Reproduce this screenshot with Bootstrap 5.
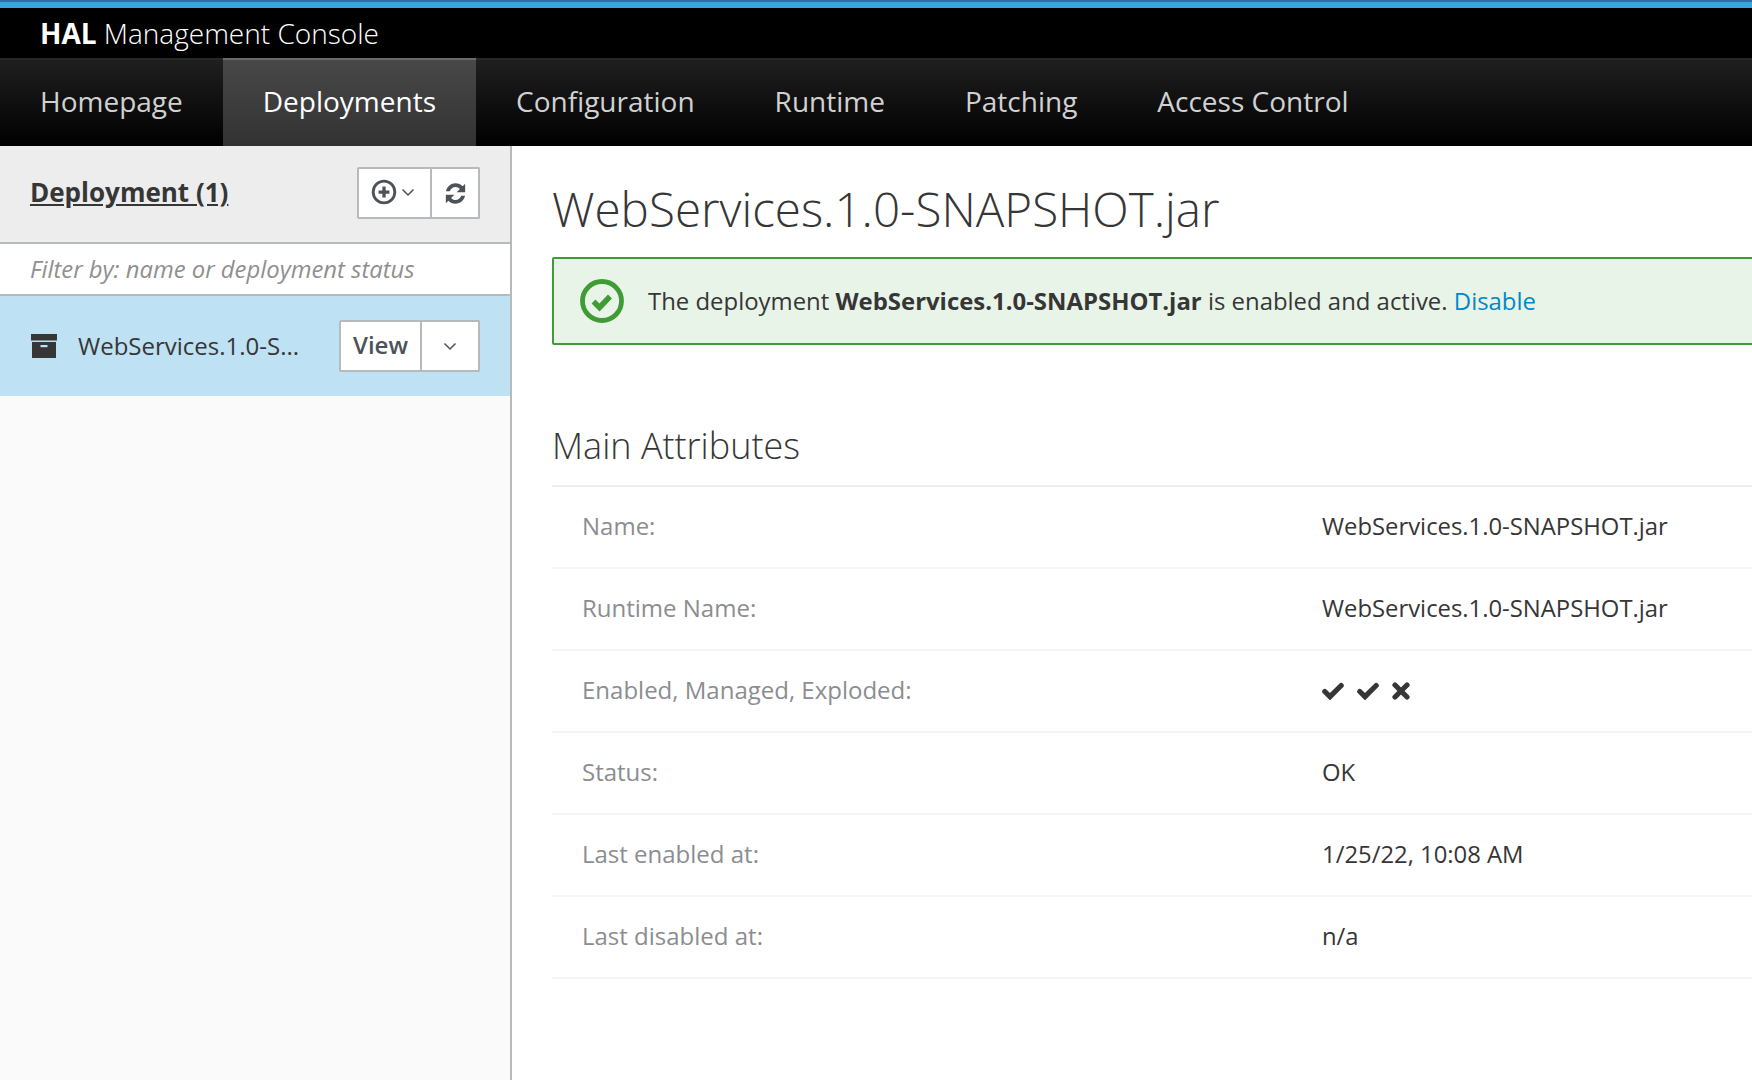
<!DOCTYPE html>
<html lang="en">
<head>
<meta charset="utf-8">
<title>HAL Management Console</title>
<link href="https://cdn.jsdelivr.net/npm/bootstrap@5.3.0/dist/css/bootstrap.min.css" rel="stylesheet">
<style>
html,body{height:100%;overflow:hidden}
body{font-family:"Open Sans",sans-serif;color:#363636;background:#fff;font-size:24px}
.shell{height:1080px;display:flex;flex-direction:column}
.topline{height:8px;background:#39a5dc;border-top:2px solid #2d6ea6;flex:none}
.brandbar{height:50px;background:#000;color:#fff;padding-left:40px;font-size:28px;font-weight:300;line-height:50px;flex:none}
.brandbar b{font-weight:700}
.mainnav{height:88px;background:linear-gradient(#1f1f1f,#000);border-top:2px solid #272727;flex:none}
.mainnav a{display:block;padding:0 40px;height:88px;margin-top:-2px;line-height:82px;font-size:28px;color:#d1d1d1;text-decoration:none;border-top:2px solid transparent}
.mainnav a.on{background:linear-gradient(#484848,#323232);border-top-color:#6a6a6a;color:#fff}
.workarea{flex:1;min-height:0}
.sidepane{width:512px;flex:none;background:#fafafa;border-right:2px solid #b7babd}
.sidehead{height:98px;background:#ededed;border-bottom:2px solid #b7babd;padding:0 30px 2px}
.sidehead .ttl{font-size:26px;font-weight:700;color:#363636;text-decoration:underline;margin-top:-1px}
.filterrow{height:52px;background:#fff;border-bottom:2px solid #b7babd;padding:0 30px;font-style:italic;color:#8f8f8f;font-size:23.85px;line-height:50px}
.itemrow{height:100px;background:#bee1f4;padding:0 30px 0 31px}
.itemname{font-size:24px;color:#363636;margin:-1px 0 0 21px;flex:1}
.boxbtn{display:flex;align-items:center;justify-content:center;background:#fff;border:2px solid #b7babd;color:#4d5258;padding:0}
.boxbtn+.boxbtn{border-left:0}
.addb{width:75px;height:52px;gap:4px;padding-right:3px;padding-bottom:2px;border-radius:2px 0 0 2px}
.refb{width:48px;height:52px;border-radius:0 2px 2px 0}
.viewb{width:83px;height:52px;font-size:24px;font-weight:600;border-radius:2px 0 0 2px;padding-bottom:2px}
.caretb{width:58px;height:52px;border-radius:0 2px 2px 0}
.mainpane{flex:1;min-width:0;padding:0 0 0 40px;overflow:hidden}
.pagetitle{font-size:47.6px;font-weight:300;line-height:60px;margin:33px 0 0;white-space:nowrap}
.okbox{height:88px;margin-top:18px;margin-right:-4px;background:#e9f4e9;border:2px solid #3f9c35;border-radius:2px;padding-left:26px;display:flex;align-items:center;white-space:nowrap;font-size:23.92px}
.okbox svg{margin-right:24px;flex:none}
.okbox a{color:#0088ce;text-decoration:none}
.okbox b{font-weight:700}
.sectitle{font-size:36px;font-weight:300;line-height:48px;margin:77px 0 0}
.attrs{margin-top:15px;border-top:2px solid #ededed}
.attrrow{height:82px;border-bottom:2px solid #f5f5f5;align-items:center;display:flex;padding-bottom:2px}
.attrrow .lb{width:770px;padding-left:30px;color:#8b8d8f;flex:none}
.attrrow .vl{display:flex;align-items:center;gap:13px;font-size:23.85px;margin-top:1px}
</style>
</head>
<body>
<div class="shell">
  <div class="topline"></div>
  <div class="brandbar"><b>HAL</b> Management Console</div>
  <nav class="mainnav d-flex">
    <a href="#">Homepage</a>
    <a href="#" class="on">Deployments</a>
    <a href="#">Configuration</a>
    <a href="#">Runtime</a>
    <a href="#">Patching</a>
    <a href="#">Access Control</a>
  </nav>
  <div class="workarea d-flex">
    <aside class="sidepane">
      <div class="sidehead d-flex align-items-center justify-content-between">
        <span class="ttl">Deployment (1)</span>
        <div class="d-flex">
          <button class="boxbtn addb" type="button" aria-label="Add">
            <svg width="26" height="26" viewBox="0 0 24 24"><circle cx="12" cy="12" r="10" fill="none" stroke="#4d5258" stroke-width="2.600"/><path d="M12 7v10M7 12h10" stroke="#4d5258" stroke-width="3"/></svg>
            <svg width="14" height="9" viewBox="0 0 14 9"><path d="M1.500 1.500 7 7l5.500-5.500" fill="none" stroke="#4d5258" stroke-width="1.500"/></svg>
          </button>
          <button class="boxbtn refb" type="button" aria-label="Refresh">
            <svg width="25" height="25" viewBox="0 0 22 22"><path d="M2.600 9C3.500 5 7 2 11 2c2.500 0 4.700 1 6.300 2.700L19.500 2.500V10h-7.500l2.900-2.900C13.900 6 12.500 5.300 11 5.300 8.700 5.300 6.800 6.800 6 9zM19.400 13C18.500 17 15 20 11 20c-2.500 0-4.700-1-6.300-2.700L2.500 19.500V12H10l-2.900 2.900C8.100 16 9.500 16.700 11 16.700c2.300 0 4.200-1.500 5-3.700z" fill="#4d5258"/></svg>
          </button>
        </div>
      </div>
      <div class="filterrow">Filter by: name or deployment status</div>
      <div class="itemrow d-flex align-items-center">
        <svg width="26" height="24" viewBox="0 0 26 24"><path d="M0 0h26v6.500H0zM1 8h24v16H1z" fill="#363636"/><rect x="9.500" y="11" width="7" height="2.200" fill="#bee1f4"/></svg>
        <span class="itemname">WebServices.1.0-S...</span>
        <div class="d-flex">
          <button class="boxbtn viewb" type="button">View</button>
          <button class="boxbtn caretb" type="button" aria-label="More">
            <svg width="14" height="9" viewBox="0 0 14 9"><path d="M1.500 1.500 7 7l5.500-5.500" fill="none" stroke="#4d5258" stroke-width="1.500"/></svg>
          </button>
        </div>
      </div>
    </aside>
    <main class="mainpane">
      <h1 class="pagetitle">WebServices.1.0-SNAPSHOT.jar</h1>
      <div class="okbox">
        <svg width="44" height="44" viewBox="0 0 44 44"><circle cx="22" cy="22" r="19.500" fill="none" stroke="#3f9c35" stroke-width="4.800"/><path d="M13.500 22.500l6 6 10.500-11" fill="none" stroke="#3f9c35" stroke-width="5.500"/></svg>
        <span>The deployment <b>WebServices.1.0-SNAPSHOT.jar</b> is enabled and active. <a href="#">Disable</a></span>
      </div>
      <h2 class="sectitle">Main Attributes</h2>
      <div class="attrs">
        <div class="attrrow"><div class="lb">Name:</div><div class="vl">WebServices.1.0-SNAPSHOT.jar</div></div>
        <div class="attrrow"><div class="lb">Runtime Name:</div><div class="vl">WebServices.1.0-SNAPSHOT.jar</div></div>
        <div class="attrrow"><div class="lb">Enabled, Managed, Exploded:</div><div class="vl">
          <svg width="22" height="18" viewBox="0 0 22 18"><path d="M2.800 9.500 8 14.700 19.200 3.500" fill="none" stroke="#363636" stroke-width="5.200" stroke-linecap="round"/></svg>
          <svg width="22" height="18" viewBox="0 0 22 18"><path d="M2.800 9.500 8 14.700 19.200 3.500" fill="none" stroke="#363636" stroke-width="5.200" stroke-linecap="round"/></svg>
          <svg width="18" height="18" viewBox="0 0 18 18"><path d="M3 3l12 12M15 3 3 15" fill="none" stroke="#363636" stroke-width="5.200" stroke-linecap="round"/></svg>
        </div></div>
        <div class="attrrow"><div class="lb">Status:</div><div class="vl">OK</div></div>
        <div class="attrrow"><div class="lb">Last enabled at:</div><div class="vl">1/25/22, 10:08 AM</div></div>
        <div class="attrrow"><div class="lb">Last disabled at:</div><div class="vl">n/a</div></div>
      </div>
    </main>
  </div>
</div>
<script src="https://cdn.jsdelivr.net/npm/bootstrap@5.3.0/dist/js/bootstrap.bundle.min.js"></script>
</body>
</html>
